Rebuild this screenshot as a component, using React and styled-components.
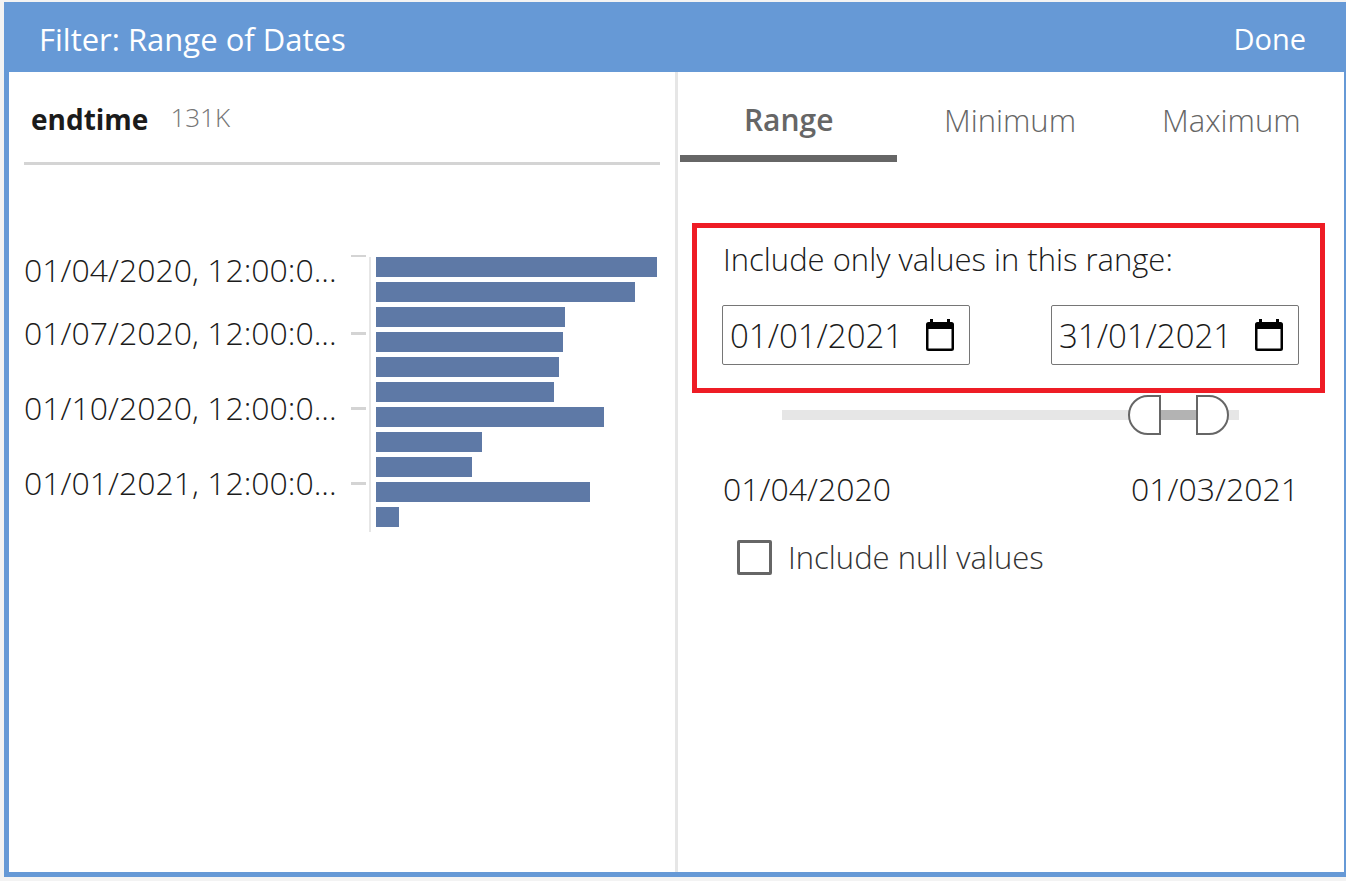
import React, { useState } from "react";
import styled, { createGlobalStyle } from "styled-components";

const GlobalStyle = createGlobalStyle`
  *, *::before, *::after { box-sizing: border-box; }
  body {
    margin: 0;
    background: #f3f3f3;
    color: #1b1b1b;
    font-family: "Open Sans", "Noto Sans", sans-serif;
    font-size: 31px;
    font-weight: 350;
    line-height: 40px;
  }
  button, input { font: inherit; color: inherit; margin: 0; }
`;

const Frame = styled.main`
  display: flex;
  flex-direction: column;
  min-height: calc(100vh - 6px);
  margin: 2px 0 4px 4px;
  border: solid #6699d6;
  border-width: 0 2px 5px 5px;
  background: #fff;
`;

const TitleBar = styled.header`
  display: flex;
  align-items: center;
  justify-content: space-between;
  height: 70px;
  padding: 4px 38px 0 30px;
  background: #6699d6;
  color: #fff;
`;

const Title = styled.h1`
  margin: 0;
  font-size: 31px;
  font-weight: 400;
`;

const DoneButton = styled.button`
  padding: 0;
  border: 0;
  background: none;
  font-size: 29px;
  font-weight: 400;
  cursor: pointer;
`;

const Panels = styled.div`
  flex: 1;
  display: grid;
  grid-template-columns: minmax(0, 1fr) 3px minmax(0, 1fr);
`;

const Divider = styled.div`
  background: #e6e6e6;
`;

const FieldPanel = styled.section`
  padding: 0 15px;
`;

const FieldHeader = styled.div`
  display: flex;
  align-items: center;
  gap: 22px;
  height: 93px;
  padding: 0 7px;
  border-bottom: 3px solid #d4d4d4;
`;

const FieldName = styled.h2`
  margin: 0;
  padding-top: 4px;
  font-size: 28px;
  font-weight: 700;
`;

const FieldCount = styled.span`
  color: #757575;
  font-size: 26px;
`;

const Histogram = styled.div`
  display: flex;
  padding-top: 90px;
`;

const AxisLabels = styled.div`
  flex: 1;
  display: grid;
  grid-template-rows: 63px 75px 75px 30px;
  font-size: 32px;
  line-height: 30px;
  white-space: nowrap;
`;

const Axis = styled.svg`
  flex: none;
  display: block;
`;

const Bars = styled.div`
  display: flex;
  flex-direction: column;
  gap: 5px;
  width: 284px;
  padding: 2px 3px 0 0;
`;

const Bar = styled.div`
  height: 20px;
  background: #5e79a6;
`;

const Tabs = styled.div`
  display: grid;
  grid-template-columns: repeat(3, 1fr);
  height: 90px;
  padding: 0 0 0 2px;
`;

const Tab = styled.button`
  margin-right: 4px;
  padding: 12px 0 0;
  border: 0;
  border-bottom: 7px solid ${(p) => (p.$active ? "#666" : "transparent")};
  background: none;
  color: #666;
  font-size: ${(p) => (p.$active ? 30 : 31)}px;
  font-weight: ${(p) => (p.$active ? 600 : 350)};
  cursor: pointer;
`;

const RangeBox = styled.fieldset`
  margin: 61px 19px 0 14px;
  padding: 11px 21px 23px 25px;
  border: 5px solid #ee1c25;
`;

const RangeCaption = styled.p`
  margin: 0 0 26px 1px;
`;

const DateRow = styled.div`
  display: flex;
  justify-content: space-between;
`;

const DateField = styled.div`
  display: flex;
  align-items: center;
  width: 248px;
  height: 60px;
  padding: 0 15px 0 7px;
  border: 1px solid #767676;
  border-radius: 2px;
`;

const DateInput = styled.input`
  flex: 1;
  min-width: 0;
  height: 40px;
  padding: 2px 0 0;
  border: 0;
  outline: 0;
  background: none;
  font-size: 33px;
`;

const CalendarButton = styled.button`
  display: flex;
  padding: 0;
  border: 0;
  background: none;
  color: #000;
  cursor: pointer;
`;

const Slider = styled.div`
  position: relative;
  display: flex;
  align-items: center;
  height: 40px;
  margin: 2px 105px 0 104px;
`;

const Track = styled.div`
  flex: 1;
  height: 10px;
  background: #e6e6e6;
`;

const Selection = styled.div`
  height: 100%;
  background: #b3b3b3;
`;

const Thumb = styled.input`
  position: absolute;
  inset: 0;
  width: 100%;
  height: 40px;
  appearance: none;
  background: none;
  pointer-events: none;

  &::-webkit-slider-thumb {
    appearance: none;
    width: 33px;
    height: 40px;
    border: 2px solid #666;
    border-radius: ${(p) => (p.$side === "start" ? "20px 0 0 20px" : "0 20px 20px 0")};
    background: #fff;
    pointer-events: auto;
    cursor: pointer;
  }
`;

const Limits = styled.div`
  display: flex;
  justify-content: space-between;
  padding: 34px 45px 0;
  font-size: 32px;
`;

const NullOption = styled.label`
  display: flex;
  align-items: center;
  gap: 16px;
  margin: 28px 0 0 59px;
  color: #333;
`;

const Checkbox = styled.input`
  appearance: none;
  width: 35px;
  height: 35px;
  border: 3px solid #666;
  border-radius: 2px;
  background: #fff;

  &:checked { background: #666; }
`;

const counts = [281, 259, 189, 187, 183, 178, 228, 106, 96, 214, 23];
const axisDates = ["01/04/2020", "01/07/2020", "01/10/2020", "01/01/2021"];

function CalendarIcon() {
  return (
    <svg width="28" height="33" viewBox="0 0 28 33" aria-hidden="true">
      <path
        fill="currentColor"
        fillRule="evenodd"
        d="M4 0h3v3h14V0h3v3h1.500a2.500 2.500 0 0 1 2.500 2.500v24a2.500 2.500 0 0 1-2.500 2.500h-23A2.500 2.500 0 0 1 0 29.500v-24A2.500 2.500 0 0 1 2.500 3H4zM2.500 10v19.500h23V10z"
      />
    </svg>
  );
}

function DatePicker({ label, value, onChange }) {
  return (
    <DateField>
      <DateInput
        type="text"
        aria-label={label}
        value={value}
        onChange={(e) => onChange(e.target.value)}
      />
      <CalendarButton type="button" aria-label={`Choose ${label}`}>
        <CalendarIcon />
      </CalendarButton>
    </DateField>
  );
}

export default function App() {
  const [tab, setTab] = useState("Range");
  const [from, setFrom] = useState("01/01/2021");
  const [to, setTo] = useState("31/01/2021");
  const [low, setLow] = useState(816);
  const [high, setHigh] = useState(976);
  const [nulls, setNulls] = useState(false);

  return (
    <>
      <GlobalStyle />
      <Frame>
        <TitleBar>
          <Title>Filter: Range of Dates</Title>
          <DoneButton type="button">Done</DoneButton>
        </TitleBar>
        <Panels>
          <FieldPanel>
            <FieldHeader>
              <FieldName>endtime</FieldName>
              <FieldCount>131K</FieldCount>
            </FieldHeader>
            <Histogram>
              <AxisLabels>
                {axisDates.map((d) => (
                  <span key={d}>{d}, 12:00:0...</span>
                ))}
              </AxisLabels>
              <Axis width="25" height="277" aria-hidden="true">
                <path fill="#d4d4d4" d="M0 0h15v2H0zM0 77h15v3H0zM0 152h15v3H0zM0 227h15v3H0z" />
                <path fill="#e6e6e6" d="M18 2h2v275h-2z" />
              </Axis>
              <Bars>
                {counts.map((c, i) => (
                  <Bar key={i} style={{ width: `${(c / 281) * 100}%` }} />
                ))}
              </Bars>
            </Histogram>
          </FieldPanel>
          <Divider />
          <section>
            <Tabs role="tablist">
              {["Range", "Minimum", "Maximum"].map((name) => (
                <Tab
                  key={name}
                  type="button"
                  role="tab"
                  aria-selected={tab === name}
                  $active={tab === name}
                  onClick={() => setTab(name)}
                >
                  {name}
                </Tab>
              ))}
            </Tabs>
            <RangeBox>
              <RangeCaption>Include only values in this range:</RangeCaption>
              <DateRow>
                <DatePicker label="start date" value={from} onChange={setFrom} />
                <DatePicker label="end date" value={to} onChange={setTo} />
              </DateRow>
            </RangeBox>
            <Slider>
              <Track>
                <Selection
                  style={{ marginLeft: `${low / 10}%`, width: `${(high - low) / 10}%` }}
                />
              </Track>
              <Thumb
                type="range"
                aria-label="Range start"
                $side="start"
                min="0"
                max="1000"
                value={low}
                onChange={(e) => setLow(Math.min(Number(e.target.value), high))}
              />
              <Thumb
                type="range"
                aria-label="Range end"
                $side="end"
                min="0"
                max="1000"
                value={high}
                onChange={(e) => setHigh(Math.max(Number(e.target.value), low))}
              />
            </Slider>
            <Limits>
              <span>01/04/2020</span>
              <span>01/03/2021</span>
            </Limits>
            <NullOption>
              <Checkbox
                type="checkbox"
                checked={nulls}
                onChange={(e) => setNulls(e.target.checked)}
              />
              Include null values
            </NullOption>
          </section>
        </Panels>
      </Frame>
    </>
  );
}
